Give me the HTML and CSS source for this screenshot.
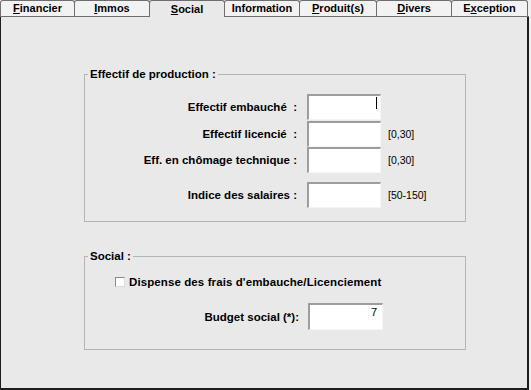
FILE: index.html
```html
<!DOCTYPE html>
<html>
<head>
  <meta charset="utf-8">
  <title>Social</title>
  <link rel="stylesheet" href="styles.css">
</head>
<body>
  <div class="window">
    <div class="tabs">
      <div class="tab"><u>F</u>inancier</div>
      <div class="tab"><u>I</u>mmos</div>
      <div class="tab tab-active"><u>S</u>ocial</div>
      <div class="tab">Information</div>
      <div class="tab tab-wide"><u>P</u>roduit(s)</div>
      <div class="tab"><u>D</u>ivers</div>
      <div class="tab tab-last">E<u>x</u>ception</div>
    </div>

    <div class="panel">
      <!-- Effectifs -->
      <fieldset class="group">
        <legend>Effectif de production :</legend>
        <div class="row row-first">
          <label class="row-label">Effectif embauché&nbsp; :</label>
          <div class="field"><span class="caret"></span></div>
        </div>
        <div class="row">
          <label class="row-label">Effectif licencié&nbsp; :</label>
          <div class="field"></div>
          <span class="range">[0,30]</span>
        </div>
        <div class="row">
          <label class="row-label">Eff. en chômage technique :</label>
          <div class="field"></div>
          <span class="range">[0,30]</span>
        </div>
        <div class="row row-apart">
          <label class="row-label">Indice des salaires :</label>
          <div class="field"></div>
          <span class="range">[50-150]</span>
        </div>
      </fieldset>

      <!-- Social -->
      <fieldset class="group group-social">
        <legend>Social :</legend>
        <div class="check-row">
          <span class="checkbox"></span>
          <span>Dispense des frais d'embauche/Licenciement</span>
        </div>
        <div class="row row-budget">
          <label class="row-label">Budget social (*):</label>
          <div class="field field-value">7</div>
        </div>
      </fieldset>
    </div>
  </div>
</body>
</html>
```

FILE: styles.css
```css
body {
  margin: 0;
  background: #f0f0f0;
  font-family: "Liberation Sans", Arial, sans-serif;
  color: #000;
}

.window {
  width: 530px;
  height: 390px;
}

/* tab strip */
.tabs {
  display: flex;
  height: 17px;
  box-sizing: border-box;
  border-bottom: 1px solid #6e6e6e;
  width: 529px;
}
.tab {
  width: 76px;
  height: 16px;
  margin-left: -1px;
  box-sizing: border-box;
  border: 1px solid #6e6e6e;
  border-bottom: 0;
  border-radius: 3px 3px 0 0;
  background: #f2f2f2;
  font-size: 11px;
  font-weight: bold;
  line-height: 15px;
  text-align: center;
}
.tab:first-child {
  margin-left: 0;
  width: 75px;
}
.tab-wide {
  width: 78px;
}
.tab-last {
  width: 77px;
}
.tab-active {
  height: 17px;
  background: #e9e9e9;
  line-height: 17px;
}
.tab u {
  text-decoration-thickness: 1px;
}

/* panel */
.panel {
  height: 373px;
  width: 529px;
  box-sizing: border-box;
  padding: 51px 0 0 84px;
  background: #e9e9e9;
  border-left: 1px solid #1e1e1e;
  border-right: 2px solid #1e1e1e;
  border-bottom: 2px solid #1e1e1e;
}

.group {
  margin: 0;
  width: 382px;
  min-width: 0;
  box-sizing: border-box;
  padding: 13px 0 13px 0;
  border: 1px solid #b4b4b4;
  margin-left: -1px;
}
.group legend {
  margin-left: 3px;
  padding: 0 2px;
  font-size: 11.5px;
  font-weight: bold;
  line-height: 13px;
}
.group-social {
  margin-top: 28px;
  padding: 12px 0 19px 0;
}

.row {
  display: flex;
  align-items: center;
  height: 26px;
}
.row-first {
  margin-bottom: 1px;
}
.row-apart {
  margin-top: 9px;
}
.row-label {
  width: 212px;
  text-align: right;
  font-size: 11.5px;
  font-weight: bold;
  white-space: nowrap;
}

.field {
  width: 74px;
  height: 26px;
  margin-left: 10px;
  box-sizing: border-box;
  background: #fff;
  border-top: 2px solid #9d9d9d;
  border-left: 2px solid #9d9d9d;
  border-right: 1px solid #f6f6f6;
  border-bottom: 1px solid #f6f6f6;
  display: flex;
  justify-content: flex-end;
  padding: 1px 3px;
}
.caret {
  width: 1px;
  height: 12px;
  background: #000;
}
.range {
  margin-left: 7px;
  font-size: 10.5px;
}

.check-row {
  display: flex;
  align-items: center;
  height: 13px;
  padding-left: 30px;
  font-size: 11.5px;
  font-weight: bold;
  letter-spacing: 0.1px;
}
.checkbox {
  width: 10px;
  height: 10px;
  box-sizing: border-box;
  margin-right: 4px;
  background: #fff;
  border-top: 1px solid #8a8a8a;
  border-left: 1px solid #8a8a8a;
  border-right: 1px solid #dcdcdc;
  border-bottom: 1px solid #dcdcdc;
}

.row-budget {
  margin-top: 15px;
  height: 27px;
}
.row-budget .row-label {
  width: 214px;
}
.field-value {
  width: 75px;
  height: 27px;
  margin-left: 9px;
  padding: 1px 5px;
  font-size: 11px;
  line-height: 13px;
}
```
